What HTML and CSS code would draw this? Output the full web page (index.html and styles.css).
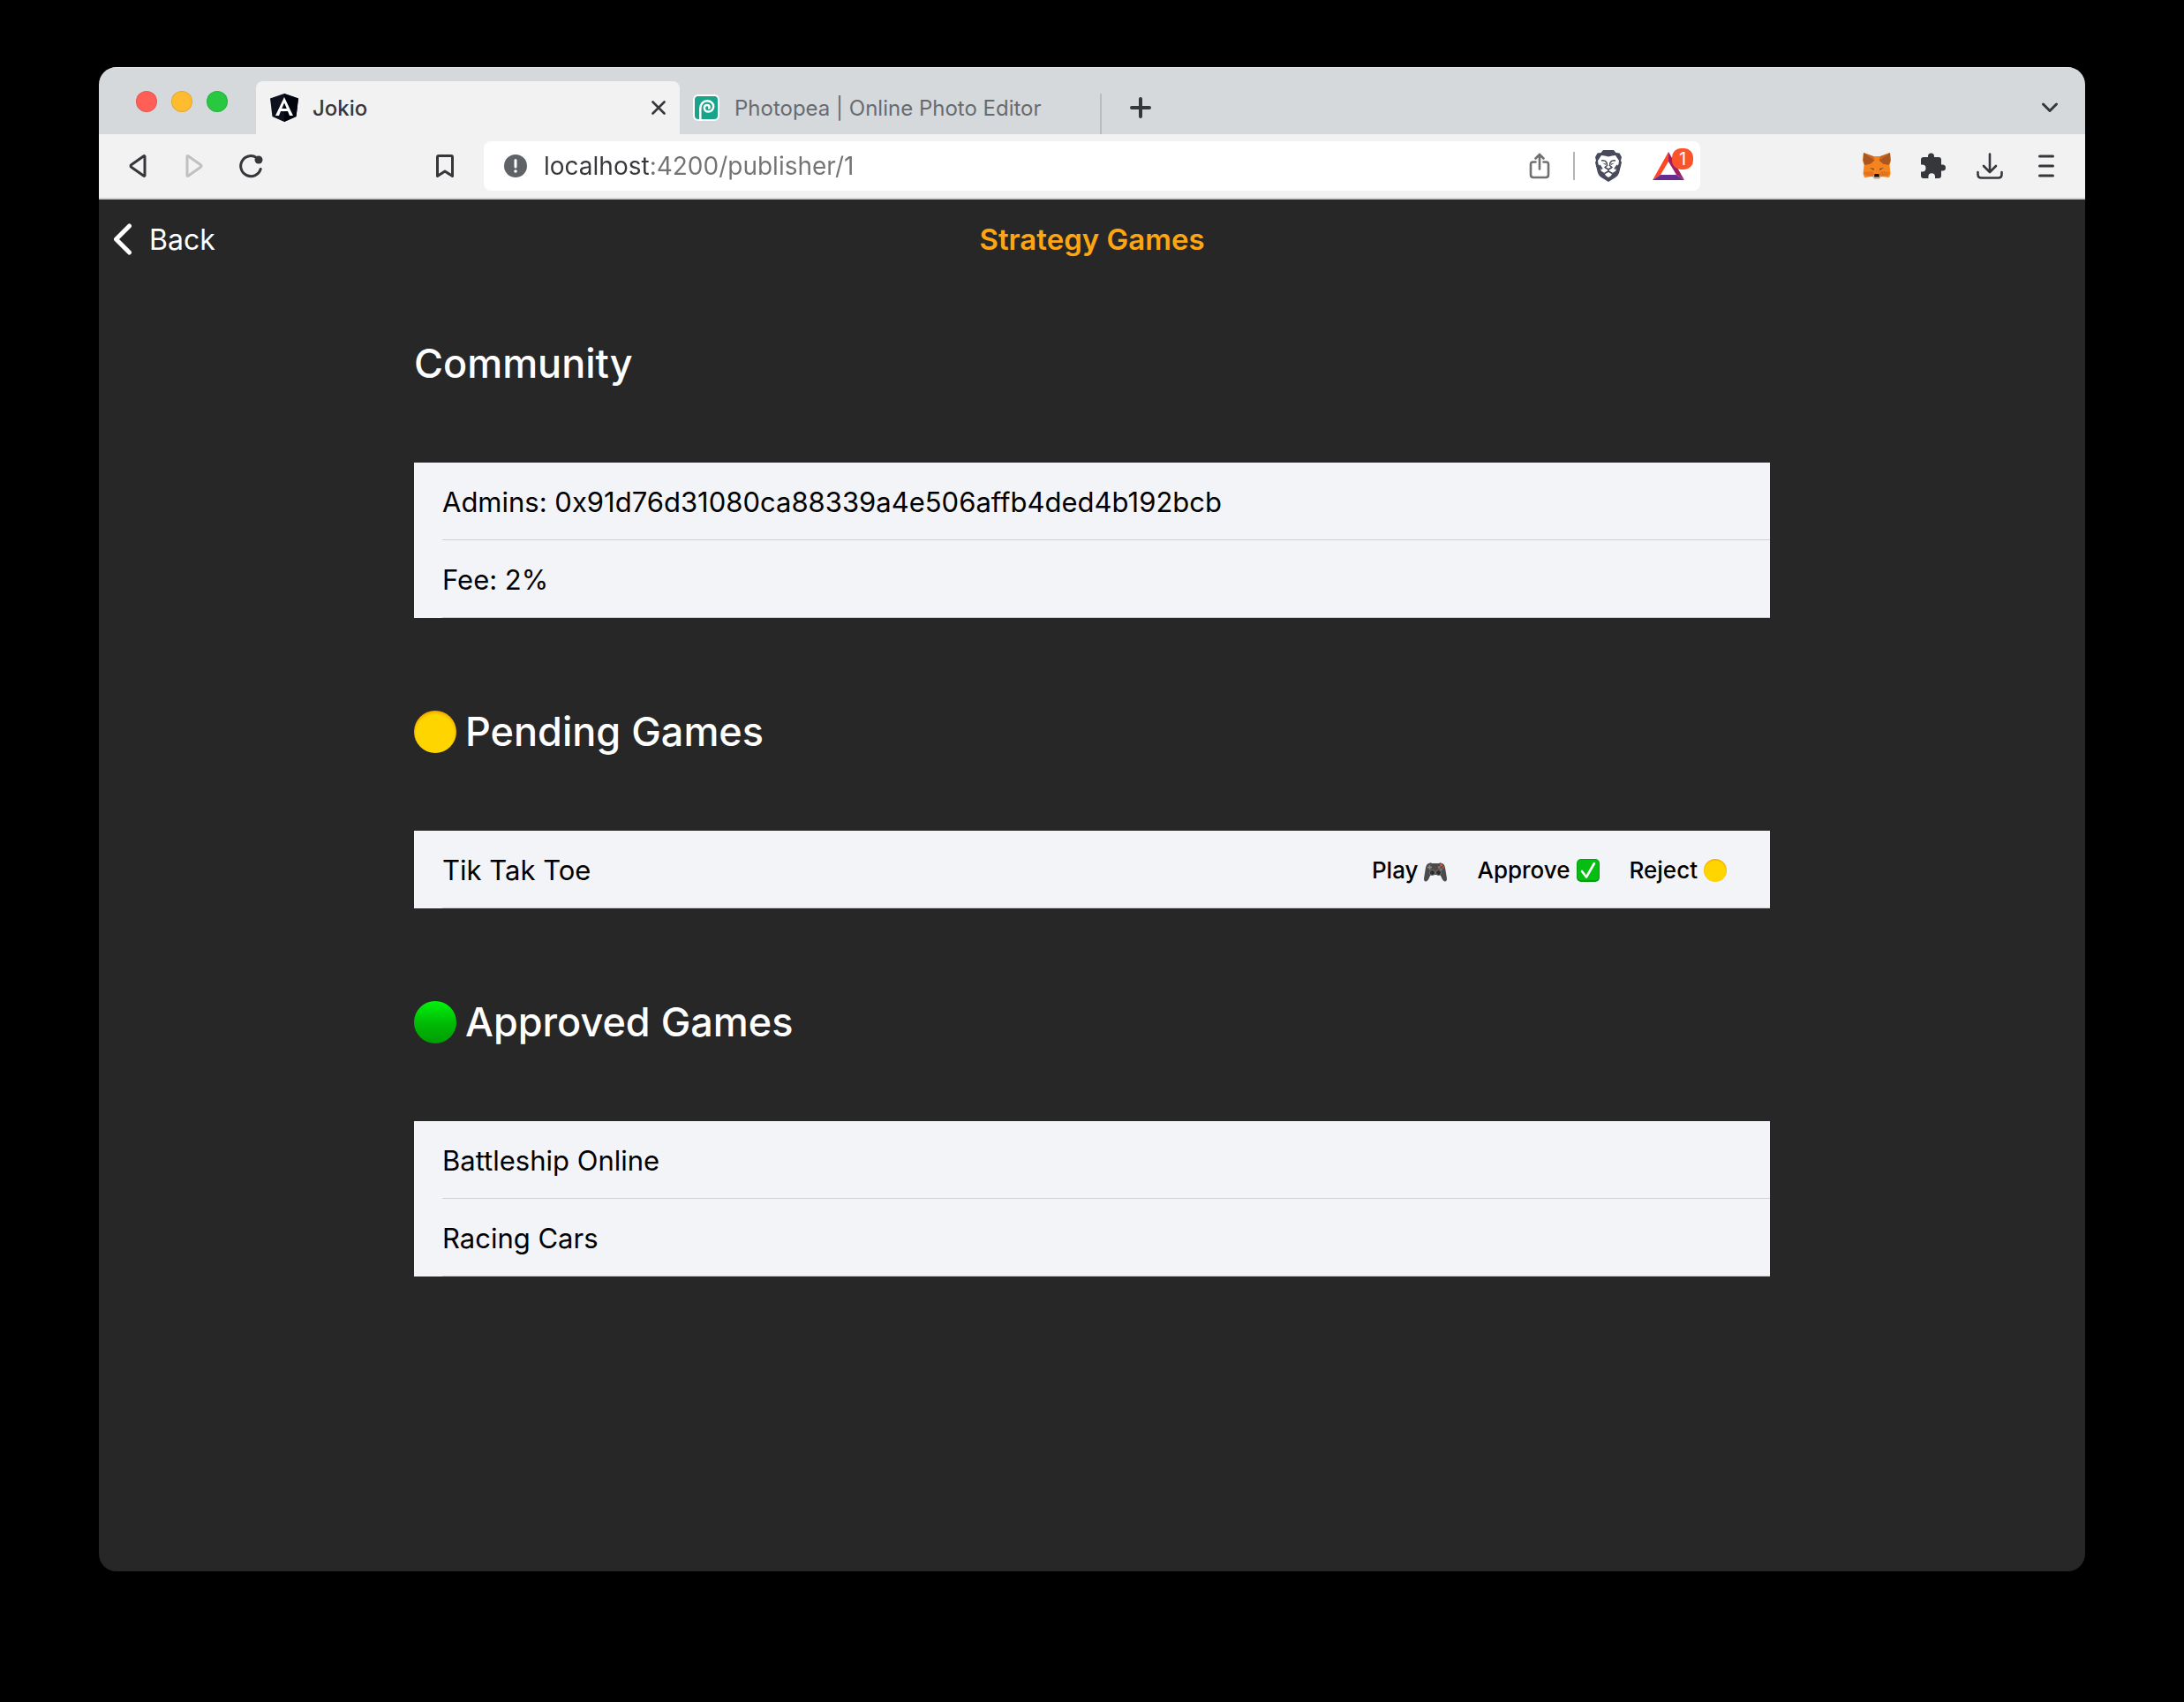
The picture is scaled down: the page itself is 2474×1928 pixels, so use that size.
FILE: index.html
```html
<!DOCTYPE html>
<html lang="en">
<head>
<meta charset="utf-8">
<meta name="viewport" content="width=device-width, initial-scale=1">
<title>Jokio</title>
<link rel="stylesheet" href="styles.css">
</head>
<body>
<div class="window">
  <div class="tab-strip">
    <div class="window-controls">
      <button class="light light-close" type="button" aria-label="Close window"></button>
      <button class="light light-minimize" type="button" aria-label="Minimize window"></button>
      <button class="light light-zoom" type="button" aria-label="Zoom window"></button>
    </div>
    <div class="tab tab-active">
      <svg class="favicon" width="32" height="32" viewBox="0 0 32 32" aria-hidden="true">
        <path d="M16 0L32 5.500L29.500 26L16 32L2.500 26L0 5.500Z" fill="#0d111c"/>
        <path d="M16 0L32 5.500L29.500 26L16 32Z" fill="#02040d"/>
        <path fill-rule="evenodd" d="M16 4L26 25H22L20 20H12L10 25H6ZM16 10.500L13.200 17H18.800Z" fill="#fff"/>
      </svg>
      <button class="tab-title" type="button">Jokio</button>
      <button class="tab-close" type="button" aria-label="Close tab">
        <svg width="16" height="16" viewBox="0 0 16 16" fill="none" stroke="#35373b" stroke-width="2.600" stroke-linecap="round"><path d="M1.500 1.500L14.500 14.500M14.500 1.500L1.500 14.500"/></svg>
      </button>
    </div>
    <div class="tab tab-inactive">
      <svg class="favicon" width="30" height="30" viewBox="0 0 30 30" aria-hidden="true">
        <rect width="30" height="30" rx="6" fill="#fff"/>
        <rect x="2" y="2" width="26" height="26" rx="4" fill="#18a48a"/>
        <path d="M8.300 28V16C8.300 10.500 12 7.200 16 7.200C20.300 7.200 23.200 10.200 23.200 13.600C23.200 17 20.500 19.600 17.500 19.600C14.500 19.600 12.800 17.500 12.800 15.300C12.800 13.200 14.300 11.900 16 11.900C17.600 11.900 18.600 13 18.600 14.200C18.600 15 18 15.600 17.200 15.600" fill="none" stroke="#fff" stroke-width="2.500"/>
      </svg>
      <button class="tab-title" type="button">Photopea | Online Photo Editor</button>
    </div>
    <button class="new-tab" type="button" aria-label="New tab">
      <svg width="24" height="24" viewBox="0 0 24 24" fill="none" stroke="#35373b" stroke-width="4" stroke-linecap="round"><path d="M12 2V22M2 12H22"/></svg>
    </button>
    <button class="tab-search" type="button" aria-label="Search tabs">
      <svg width="20" height="12" viewBox="0 0 20 12" fill="none" stroke="#35373b" stroke-width="3" stroke-linecap="round" stroke-linejoin="round"><path d="M2.500 2L10 9.500L17.500 2"/></svg>
    </button>
  </div>

  <div class="toolbar">
    <button class="tool" type="button" aria-label="Go back">
      <svg width="20" height="28" viewBox="0 0 20 28" fill="none" stroke="#35373b" stroke-width="3" stroke-linejoin="round"><path d="M18 3.500V24.500Q18 26 16.500 25L3 15.500Q1 14 3 12.500L16.500 3Q18 2 18 3.500Z"/></svg>
    </button>
    <button class="tool" type="button" aria-label="Go forward" disabled>
      <svg width="20" height="28" viewBox="0 0 20 28" fill="none" stroke="#bfc0c2" stroke-width="3" stroke-linejoin="round"><path d="M2 3.500V24.500Q2 26 3.500 25L17 15.500Q19 14 17 12.500L3.500 3Q2 2 2 3.500Z"/></svg>
    </button>
    <button class="tool" type="button" aria-label="Reload">
      <svg width="28" height="28" viewBox="0 0 28 28" fill="none" stroke="#35373b" stroke-width="3" stroke-linecap="round"><path d="M20.500 4.500A11.500 11.500 0 1 0 25.200 17.500"/><circle cx="23" cy="7" r="4.500" fill="#35373b" stroke="none"/></svg>
    </button>
    <button class="tool bookmark" type="button" aria-label="Bookmark this page">
      <svg width="22" height="28" viewBox="0 0 22 28" fill="none" stroke="#35373b" stroke-width="3" stroke-linejoin="round"><path d="M2.500 4Q2.500 2.500 4 2.500H18Q19.500 2.500 19.500 4V25.500L11 20L2.500 25.500Z"/></svg>
    </button>
    <div class="address-bar">
      <svg width="26" height="26" viewBox="0 0 26 26" aria-hidden="true"><circle cx="13" cy="13" r="13" fill="#5f6368"/><path d="M13 6.500V14" stroke="#fff" stroke-width="3" stroke-linecap="round"/><circle cx="13" cy="19" r="1.800" fill="#fff"/></svg>
      <input class="address" type="text" aria-label="Address" value="localhost:4200/publisher/1">
      <button class="address-tool" type="button" aria-label="Share">
        <svg width="24" height="30" viewBox="0 0 24 30" fill="none" stroke="#6f7072" stroke-width="2.600" stroke-linecap="round" stroke-linejoin="round"><path d="M7.500 10.500H4.500Q2 10.500 2 13V25Q2 28 5 28H19Q22 28 22 25V13Q22 10.500 19.500 10.500H16.500M12 18.500V2.500M7.500 6.500L12 2L16.500 6.500"/></svg>
      </button>
      <span class="divider"></span>
      <button class="address-tool" type="button" aria-label="Shields">
        <svg width="32" height="36" viewBox="0 0 32 36"><path d="M10 0H22L24.500 3L28.500 3.500L31 8L30 12L31 14L28 26Q27 29 24 31L16 36L8 31Q5 29 4 26L1 14L2 12L1 8L3.500 3.500L7.500 3Z" fill="#474a5c"/><path d="M8 6L12 6.500L16 7.500L20 6.500L24 6L28 12L27.500 16L24.500 20L24.500 23.500L20.500 26L19 29L16 31L13 29L11.500 26L7.500 23.500L7.500 20L4.500 16L4 12Z" fill="#fff"/><path d="M8 12Q12 11 14 14M24 12Q20 11 18 14M14 14L14.500 17.500L12 19.500L16 22L20 19.500L17.500 17.500L18 14M16 22V24.500M11.500 26.500L16 24L20.500 26.500M6 17L9 21.500M26 17L23 21.500" fill="none" stroke="#474a5c" stroke-width="1.600" stroke-linejoin="round"/><path d="M9 14.500L13 15.500V17ZM23 14.500L19 15.500V17Z" fill="#474a5c"/></svg>
      </button>
      <button class="address-tool rewards" type="button" aria-label="Rewards, 1 notification">
        <svg width="36" height="32" viewBox="0 0 36 32"><path d="M18 0V11L9 26L0 32Z" fill="#ff4724"/><path d="M18 0L36 32L27 26L18 11Z" fill="#9e1f63"/><path d="M0 32L9 26H27L36 32Z" fill="#662d91"/></svg>
        <span class="badge">1</span>
      </button>
    </div>
    <div class="extensions">
      <button class="tool" type="button" aria-label="MetaMask">
        <svg width="32" height="30" viewBox="0 0 32 30"><path d="M1 0L12 4H20L31 0L32 9L30.500 14L31.500 24L30 28L21 27L18 30H14L11 27L2 28L0.500 24L1.500 14L0 9Z" fill="#f5841f"/><path d="M1 0L13.500 8.500L9 12.500L2.500 14L0.500 9Z" fill="#a95620"/><path d="M31 0L18.500 8.500L23 12.500L29.500 14L31.500 9Z" fill="#a95620"/><path d="M1 0L12 4L13.500 8.500ZM31 0L20 4L18.500 8.500Z" fill="#c8641f"/><path d="M1 22L11 21L14 27L4 26ZM31 22L21 21L18 27L28 26Z" fill="#e4711b"/><path d="M8 17L13 18L12.500 20ZM24 17L19 18L19.500 20Z" fill="#5a4a48"/><path d="M12 25.500H20L20 28L18 30H14L12 28Z" fill="#c7bbb2"/><path d="M13.500 24H18.500L19 27.500H13Z" fill="#161616"/></svg>
      </button>
      <button class="tool" type="button" aria-label="Extensions">
        <svg width="30" height="30" viewBox="0 0 30 30" fill="#35373b"><path d="M4 5H9V4A3.500 3.500 0 0 1 16 4V5H21Q24 5 24 8V13.500H25.500A3.500 3.500 0 0 1 25.500 20.500H24V26Q24 29 21 29H17V27A3.800 3.800 0 0 0 9.400 27V29H4Q1 29 1 26V21.500H2.500A4 4 0 0 0 2.500 13.500H1V8Q1 5 4 5Z"/></svg>
      </button>
      <button class="tool" type="button" aria-label="Downloads">
        <svg width="30" height="30" viewBox="0 0 30 30" fill="none" stroke="#35373b" stroke-width="2.600" stroke-linecap="round" stroke-linejoin="round"><path d="M15 1.500V21.500M8 15L15 22L22 15M1.500 22V24.500Q1.500 28.500 5.500 28.500H24.500Q28.500 28.500 28.500 24.500V22"/></svg>
      </button>
      <button class="tool" type="button" aria-label="Menu">
        <svg width="18" height="26" viewBox="0 0 18 26" fill="none" stroke="#35373b" stroke-width="3" stroke-linecap="round"><path d="M1.500 2H16.500M1.500 13H16.500M1.500 24H16.500"/></svg>
      </button>
    </div>
  </div>

  <div class="page">
    <header class="page-header">
      <a class="back" href="#">
        <svg width="20" height="36" viewBox="0 0 20 36" fill="none" stroke="#fff" stroke-width="5" stroke-linecap="round" stroke-linejoin="round"><path d="M17.500 3L2.500 18L17.500 33"/></svg>
        Back
      </a>
      <h1 class="page-title">Strategy Games</h1>
    </header>
    <main class="content">
      <h2 class="heading">Community</h2>
      <ul class="list">
        <li class="row"><span class="row-body">Admins: 0x91d76d31080ca88339a4e506affb4ded4b192bcb</span></li>
        <li class="row"><span class="row-body">Fee: 2%</span></li>
      </ul>

      <h2 class="heading"><span class="dot dot-yellow"></span>Pending Games</h2>
      <ul class="list">
        <li class="row">
          <div class="row-body">
            Tik Tak Toe
            <div class="actions">
              <button class="action" type="button">Play
                <svg width="26" height="26" viewBox="0 0 26 26" aria-hidden="true"><path d="M6 5Q7 3.500 9 5H17Q19 3.500 20 5Q23 5 24 10L26 22Q26 26 23.500 25.500Q21 24.500 19 19Q17 17 15.500 18H10.500Q9 17 7 19Q5 24.500 2.500 25.500Q0 26 0 22L2 10Q3 5 6 5Z" fill="#4b4b4b"/><circle cx="9.500" cy="15.500" r="3" fill="#2c2c2c" stroke="#777" stroke-width="1"/><circle cx="16.500" cy="15.500" r="3" fill="#2c2c2c" stroke="#777" stroke-width="1"/><path d="M6.500 7V12M4 9.500H9" stroke="#8a8a8a" stroke-width="1.500"/><circle cx="19.500" cy="7" r="1.400" fill="#e0563a"/><circle cx="22" cy="9.500" r="1.400" fill="#c8452f"/><circle cx="17.200" cy="9.500" r="1.400" fill="#a56a5c"/><circle cx="19.500" cy="12" r="1.400" fill="#5d8190"/></svg>
              </button>
              <button class="action" type="button">Approve
                <svg width="26" height="26" viewBox="0 0 26 26" aria-hidden="true"><rect width="26" height="26" rx="5" fill="#079a16"/><rect x="1" y="1" width="24" height="23" rx="4" fill="#06bd12"/><path d="M6 14L11 20.500L20 5" fill="none" stroke="#fff" stroke-width="2.600" stroke-linecap="round" stroke-linejoin="round"/></svg>
              </button>
              <button class="action" type="button">Reject
                <span class="dot dot-small dot-yellow"></span>
              </button>
            </div>
          </div>
        </li>
      </ul>

      <h2 class="heading"><span class="dot dot-green"></span>Approved Games</h2>
      <ul class="list">
        <li class="row"><span class="row-body">Battleship Online</span></li>
        <li class="row"><span class="row-body">Racing Cars</span></li>
      </ul>
    </main>
  </div>
</div>
</body>
</html>
```

FILE: styles.css
```css
* {
  box-sizing: border-box;
}

body {
  margin: 0;
  min-height: 100vh;
  padding: 76px 112px 148px;
  display: flex;
  background: #000;
  font-family: Inter, "Liberation Sans", sans-serif;
}

button {
  margin: 0;
  padding: 0;
  border: 0;
  background: none;
  color: inherit;
  font: inherit;
}

svg {
  display: block;
  flex: none;
}

.window {
  flex: 1;
  min-width: 0;
  display: flex;
  flex-direction: column;
  border-radius: 20px;
  overflow: hidden;
  background: #272727;
}

/* Tab strip */
.tab-strip {
  height: 76px;
  display: flex;
  align-items: flex-end;
  background: #d5d9dc;
  box-shadow: inset 0 1px #eceeef;
}

.window-controls {
  align-self: center;
  width: 178px;
  padding: 2px 0 0 42px;
  display: flex;
  gap: 16px;
}

.light {
  width: 24px;
  height: 24px;
  border-radius: 50%;
  border: 1px solid #0000001a;
}

.light-close { background: #ff5f57; }
.light-minimize { background: #febc2e; }
.light-zoom { background: #28c840; }

.tab {
  height: 60px;
  display: flex;
  align-items: center;
  font-size: 24px;
}

.tab-active {
  width: 480px;
  padding: 0 16px;
  gap: 16px;
  border-radius: 8px 8px 0 0;
  background: #f2f2f2;
  color: #35373b;
  font-weight: 500;
}

.tab-inactive {
  width: 476px;
  padding-left: 15px;
  gap: 17px;
  color: #676b6f;
}

.tab-title {
  flex: 1;
  text-align: left;
  white-space: nowrap;
}

.new-tab {
  height: 46px;
  padding: 0 32px;
  border-left: 2px solid #b9bdc0;
  align-self: flex-end;
  padding-bottom: 14px;
  display: flex;
  align-items: center;
}

.tab-search {
  height: 60px;
  margin-left: auto;
  padding: 0 30px;
}

/* Toolbar */
.toolbar {
  height: 74px;
  padding: 0 12px;
  display: flex;
  align-items: center;
  border-bottom: 2px solid #cdd1d4;
  background: #f2f2f2;
}

.tool {
  width: 64px;
  height: 56px;
  flex: none;
  display: flex;
  align-items: center;
  justify-content: center;
}

.bookmark {
  margin: 0 12px 0 156px;
}

.address-bar {
  flex: 1;
  min-width: 0;
  height: 56px;
  padding: 0 18px 0 23px;
  display: flex;
  align-items: center;
  border-radius: 8px;
  background: #fff;
}

.address {
  flex: 1;
  min-width: 0;
  height: 56px;
  margin-left: 19px;
  padding: 0;
  border: 0;
  outline: 0;
  font: 400 28px Inter, "Liberation Sans", sans-serif;
  color: transparent;
  /* host is darker than the rest of the address */
  background: linear-gradient(90deg, #35373b 120px, #737373 120px);
  -webkit-background-clip: text;
  background-clip: text;
}

.address-tool {
  flex: none;
}

.divider {
  width: 2px;
  height: 32px;
  margin: 0 22px 0 26px;
  background: #b4b4b4;
}

.rewards {
  position: relative;
  margin-left: 34px;
}

.badge {
  position: absolute;
  left: 22px;
  top: -4px;
  width: 24px;
  height: 24px;
  border-radius: 10px;
  background: #fb542b;
  color: #fff;
  font-size: 20px;
  line-height: 24px;
}

.extensions {
  margin-left: 168px;
  display: flex;
}

/* Page */
.page-header {
  height: 88px;
  padding: 2px 17px 0;
  display: grid;
  grid-template-columns: 1fr auto 1fr;
  align-items: center;
  font-size: 32px;
}

.back {
  justify-self: start;
  display: flex;
  align-items: center;
  gap: 20px;
  color: #fff;
  text-decoration: none;
}

.page-title {
  margin: 0;
  color: #fda612;
  font-size: 33px;
  font-weight: 600;
}

.content {
  max-width: 1536px;
  margin: 0 auto;
  padding: 69px 0 100px;
}

.heading {
  margin: 100px 0 83px;
  display: flex;
  align-items: center;
  gap: 10px;
  color: #fff;
  font-size: 45px;
  font-weight: 500;
  line-height: 58px;
}

.heading:first-child {
  margin-top: 0;
}

.list {
  margin: 0;
  padding: 0;
  list-style: none;
  background: #f3f4f8;
  color: #000;
  font-size: 31px;
}

.row {
  padding-left: 32px;
}

.row-body {
  min-height: 88px;
  padding: 2px 49px 0 0;
  display: flex;
  align-items: center;
  justify-content: space-between;
  border-bottom: 1px solid #d0d1d5;
}

.actions {
  display: flex;
  gap: 34px;
}

.action {
  display: flex;
  align-items: center;
  gap: 7px;
  font-size: 26px;
  font-weight: 500;
}

.dot {
  width: 48px;
  height: 48px;
  border-radius: 50%;
}

.dot-small {
  width: 26px;
  height: 26px;
}

.dot-yellow {
  background: radial-gradient(circle at 50% 54%, #ffd500 60%, #f0a000 74%);
}

.dot-green {
  background: linear-gradient(#00f50c, #00bc06 50%, #009c04);
}
```
